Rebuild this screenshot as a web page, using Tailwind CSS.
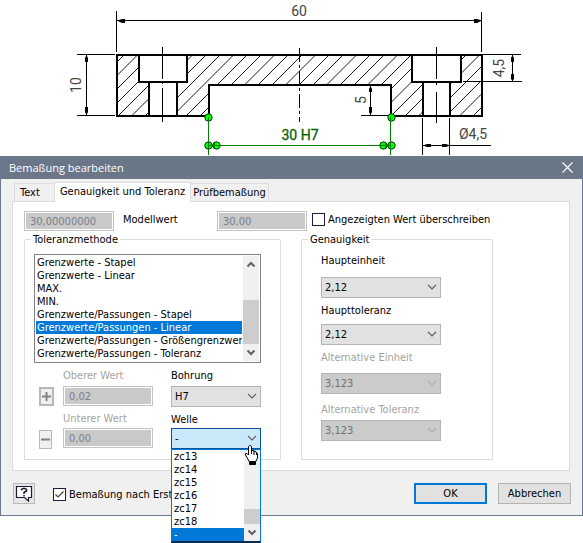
<!DOCTYPE html>
<html lang="de">
<head>
  <meta charset="UTF-8" />
  <meta name="viewport" content="width=device-width, initial-scale=1" />
  <title>Bemaßung bearbeiten</title>
  <script src="https://cdn.jsdelivr.net/npm/@tailwindcss/browser@4"></script>
</head>
<body class="bg-white text-black text-[11px] leading-[13px] font-['DejaVu_Sans_Condensed','Noto_Sans',sans-serif] pb-[27px]">

  <!-- part drawing -->
  <svg class="block w-full h-[156px]" viewBox="0 0 583 156" preserveAspectRatio="xMinYMin slice" fill="none" stroke="#000" font-family="Roboto, sans-serif" font-size="14">
    <defs>
      <clipPath id="part"><path d="M117 55H482V116H391V85H209V116H117Z" /></clipPath>
    </defs>
    <path clip-path="url(#part)" stroke-width="0.900" d="M124 55l-61 61M137.500 55l-61 61M151 55l-61 61M165 55l-61 61M179 55l-61 61M192.500 55l-61 61M206 55l-61 61M220 55l-61 61M233.500 55l-61 61M247 55l-61 61M261 55l-61 61M274.500 55l-61 61M288 55l-61 61M302 55l-61 61M315.500 55l-61 61M329 55l-61 61M343 55l-61 61M356.500 55l-61 61M370 55l-61 61M384 55l-61 61M397.500 55l-61 61M411 55l-61 61M425 55l-61 61M438.500 55l-61 61M452 55l-61 61M466 55l-61 61M479.500 55l-61 61M493 55l-61 61M507 55l-61 61M520.500 55l-61 61M534 55l-61 61" />
    <path d="M117 55H482V116H391V85H209V116H117Z" stroke-width="2" />
    <g fill="#fff" stroke-width="2">
      <path d="M139 55V82H187V55M149 82V116H177V82" />
      <path d="M412 55V82H461V55M423 82V116H450V82" />
    </g>
    <path d="M117 55H482M117 116H209M391 116H482" stroke-width="2" />
    <!-- centre lines -->
    <path d="M162.500 47V79M162.500 82V84M162.500 88V122M436.500 47V79M436.500 82V85M436.500 92V123" />
    <path d="M299.500 48V122" stroke-dasharray="14 3 3 3" />
    <!-- dimension lines -->
    <path d="M116.500 11V52M481.500 12V52M117 20.500H482" />
    <path d="M77 54.500H115M77 115.500H115M86.500 55V115" />
    <path d="M361 115.500H388M370.500 85V115" />
    <path d="M483 54.500H521M463 81.500H522M512.500 55V81" />
    <path d="M422.500 118V155M449.500 118V155M423 145.500H491" />
    <g fill="#000" stroke="none">
      <path d="M117 20.500L122 19H125V23H122ZM482 20.500L477 19H474V23H477Z" />
      <path d="M86.500 55L85 58V62H88V58ZM86.500 115L85 112V107H88V112Z" />
      <path d="M370.500 86L369 89V92H372V89ZM370.500 115L369 112V107H372V112Z" />
      <path d="M512.500 55L511 58V62H514V58ZM512.500 81L511 79V74H514V79Z" />
      <path d="M423 145.500L427 144H431V147H427ZM450 145.500L446 144H442V147H446Z" />
    </g>
    <g fill="#444" stroke="none" text-anchor="middle">
      <text x="299" y="16">60</text>
      <text x="473" y="139">Ø4,5</text>
      <text transform="translate(81 85) rotate(-90)">10</text>
      <text transform="translate(366 100) rotate(-90)">5</text>
      <text transform="translate(504 68) rotate(-90)">4,5</text>
      <text x="300" y="140" fill="#006400" stroke="#006400" stroke-width="0.3">30 H7</text>
    </g>
    <!-- selected dimension with its grips -->
    <g fill="#0f0" stroke="#063806">
      <circle cx="208.500" cy="117.500" r="3.700" />
      <circle cx="208.500" cy="145.500" r="3.700" />
      <circle cx="216.500" cy="145.500" r="3.700" />
      <circle cx="391.500" cy="117.500" r="3.700" />
      <circle cx="383.500" cy="145.500" r="3.700" />
      <circle cx="391.500" cy="145.500" r="3.700" />
    </g>
    <path d="M209 145.500L215 143V148ZM391 145.500L385 143V148Z" fill="#008000" stroke="none" />
    <path d="M208.500 117V155M390.500 117V155M209 145.500H391" stroke="#008000" />
  </svg>

  <!-- dialog -->
  <div role="dialog" aria-labelledby="title" class="bg-[#f0f0f0] border border-t-0 border-[#6b7a90]">
    <div class="h-[23px] bg-[#697789] text-white flex items-center justify-between pl-2 pr-[9px]">
      <h1 id="title" class="font-['Open_Sans','Noto_Sans',sans-serif]">Bemaßung bearbeiten</h1>
      <button aria-label="Schließen">
        <svg class="block" width="11" height="11" stroke="#fff" stroke-width="1.200"><path d="M0.500 0.500L10.500 10.500M10.500 0.500L0.500 10.500" /></svg>
      </button>
    </div>

    <div class="pt-[2px] pl-[11px] pr-[12px]">
      <!-- tabs -->
      <div role="tablist" class="flex items-end h-[20px] pl-[2px]">
        <button role="tab" class="h-[18px] w-[40px] border border-r-0 border-b-0 border-[#dcdcdc] pl-[5px] text-left">Text</button>
        <button role="tab" aria-selected="true" class="relative z-10 h-[20px] -mb-px w-[137px] border border-b-0 border-[#dcdcdc] bg-white pb-[2px] text-center whitespace-nowrap">Genauigkeit und Toleranz</button>
        <button role="tab" class="h-[18px] w-[78px] border border-l-0 border-b-0 border-[#dcdcdc] text-center whitespace-nowrap">Prüfbemaßung</button>
      </div>

      <div class="bg-white border border-[#dcdcdc] pt-[9px] pb-[10px] pl-[11px]">
        <div class="flex items-center h-[20px] whitespace-nowrap">
          <input id="model" disabled value="30,00000000" class="w-[90px] h-[20px] shrink-0 border border-[#c3c3c3] bg-[#c9c9c9] inset-ring inset-ring-white pl-[5px] text-[#7a808a]" />
          <label for="model" class="w-[94px] pl-[9px] pb-1">Modellwert</label>
          <input aria-label="Angezeigter Wert" disabled value="30,00" class="w-[90px] h-[20px] shrink-0 border border-[#c3c3c3] bg-[#c9c9c9] inset-ring inset-ring-white ml-[9px] pl-[5px] text-[#7a808a]" />
          <label class="flex items-center gap-[3px] ml-[5px] pb-[3px]">
            <input type="checkbox" class="appearance-none size-[13px] border border-[#1c1c48] bg-white" />
            Angezeigten Wert überschreiben
          </label>
        </div>

        <div class="flex gap-5 pt-[2px]">
          <fieldset class="w-[257px] h-[227px] border border-[#dcdcdc] border-t-0 relative">
            <legend class="w-full flex items-center gap-[2px] h-[13px] -mb-[7px]">
              <span class="w-[6px] border-t border-[#dcdcdc]"></span>Toleranzmethode<span class="grow border-t border-[#dcdcdc]"></span>
            </legend>
            <div class="px-[9px] pt-[15px]">
              <div class="flex w-[227px] border border-[#828288] p-px">
                <select size="8" aria-label="Toleranzmethode" class="grow w-0 h-[105px] overflow-hidden outline-none [&>option]:h-[13px] [&>option]:min-h-0 [&>option]:p-0 [&>option]:pl-px [&>option]:leading-[13px] [&>option]:checked:bg-[linear-gradient(#0078d7,#0078d7)] [&>option]:checked:[-webkit-text-fill-color:#fff]">
                  <option>Grenzwerte - Stapel</option>
                  <option>Grenzwerte - Linear</option>
                  <option>MAX.</option>
                  <option>MIN.</option>
                  <option>Grenzwerte/Passungen - Stapel</option>
                  <option selected>Grenzwerte/Passungen - Linear</option>
                  <option>Grenzwerte/Passungen - Größengrenzwerte</option>
                  <option>Grenzwerte/Passungen - Toleranz</option>
                </select>
                <div class="w-[16px] ml-px bg-[#f0f0f0] flex flex-col items-center justify-between">
                  <svg width="16" height="16" fill="none" stroke="#606060" stroke-width="2"><path d="M4.500 10.500L8 7L11.500 10.500" /></svg>
                  <div class="w-full h-[44px] mt-auto bg-[#cdcdcd]"></div>
                  <svg width="16" height="17" fill="none" stroke="#606060" stroke-width="2"><path d="M4.500 6.500L8 10L11.500 6.500" /></svg>
                </div>
              </div>

              <div class="flex w-[227px] justify-between pt-[5px]">
                <div class="flex gap-[9px] pl-[5px]">
                  <div class="pt-[19px] flex flex-col gap-6">
                    <button disabled aria-label="Plus" class="w-[15px] h-[19px] border-2 border-[#b8b8b4] bg-[#f0f0f0] flex items-center justify-center">
                      <svg class="shrink-0" width="9" height="9" stroke="#85808a" stroke-width="2"><path d="M0 4.500H9M4.500 0V9" /></svg>
                    </button>
                    <button disabled aria-label="Minus" class="w-[13px] h-[19px] border border-[#b8b8b4] bg-[#f0f0f0] flex items-center justify-center">
                      <svg class="shrink-0" width="9" height="9" stroke="#85808a" stroke-width="2"><path d="M0 4.500H9" /></svg>
                    </button>
                  </div>
                  <div class="flex flex-col">
                    <label for="upper" class="h-[18px] text-[#a5a49c] pt-px">Oberer Wert</label>
                    <input id="upper" disabled value="0,02" class="w-[90px] h-[20px] border border-[#c3c3c3] bg-[#c9c9c9] inset-ring inset-ring-white pl-[5px] text-[#7a808a]" />
                    <label for="lower" class="h-[22px] text-[#a5a49c] pt-[6px]">Unterer Wert</label>
                    <input id="lower" disabled value="0,00" class="w-[90px] h-[20px] border border-[#c3c3c3] bg-[#c9c9c9] inset-ring inset-ring-white pl-[5px] text-[#7a808a]" />
                  </div>
                </div>
                <div class="flex flex-col w-[90px]">
                  <label for="bore" class="h-[18px] pt-px">Bohrung</label>
                  <div class="relative">
                    <select id="bore" class="appearance-none block w-full h-[21px] border border-[#b4b4b4] bg-[#e1e1e1] pl-[3px]"><option>H7</option></select>
                    <svg class="absolute right-1 top-[7px] pointer-events-none" width="10" height="7" fill="none" stroke="#606060" stroke-width="1.200"><path d="M1 1L5 5L9 1" /></svg>
                  </div>
                  <label for="shaft" class="h-[21px] pt-[6px]">Welle</label>
                  <div class="relative">
                    <select id="shaft" class="appearance-none block w-full h-[21px] border border-[#0a5299] bg-[#cbe8f9] pl-[3px]"><option>-</option></select>
                    <svg class="absolute right-1 top-[7px] pointer-events-none" width="10" height="7" fill="none" stroke="#606060" stroke-width="1.200"><path d="M1 1L5 5L9 1" /></svg>
                    <!-- open list -->
                    <div class="absolute z-20 left-0 top-[21px] w-full flex border border-[#0078d7] border-b-2 border-b-[#0a2c50] bg-white">
                      <select size="7" aria-label="Welle" class="grow w-0 h-[91px] bg-white overflow-hidden outline-none [&>option]:h-[13px] [&>option]:min-h-0 [&>option]:p-0 [&>option]:pl-[2px] [&>option]:leading-[13px] [&>option]:checked:bg-[linear-gradient(#0078d7,#0078d7)] [&>option]:checked:[-webkit-text-fill-color:#fff]">
                        <option>zc13</option>
                        <option>zc14</option>
                        <option>zc15</option>
                        <option>zc16</option>
                        <option>zc17</option>
                        <option>zc18</option>
                        <option selected>-</option>
                      </select>
                      <div class="w-[16px] bg-[#f0f0f0] flex flex-col justify-end">
                        <div class="h-[15px] bg-[#cdcdcd]"></div>
                        <svg width="16" height="17" fill="none" stroke="#606060" stroke-width="2"><path d="M4.500 6.500L8 10L11.500 6.500" /></svg>
                      </div>
                    </div>
                    <!-- hand pointer -->
                    <svg class="absolute z-30 left-[74px] top-[17px]" width="13" height="21" viewBox="0 0 13 21">
                      <path d="M4.500 0.500H5.500L6.500 2V6L7 5.500H8.500L9 7L9.500 6H10.500L11.500 8L12.500 8.500V13L10.500 17H4.500L2 12.500L0.500 10V8.500H2L3.500 10V1.500Z" fill="#fff" stroke="#000" />
                      <path d="M6.500 6V9M9 7V10M11.500 8V10" stroke="#000" fill="none" />
                      <rect x="4" y="16" width="7" height="4" rx="1" />
                    </svg>
                  </div>
                </div>
              </div>
            </div>
          </fieldset>

          <fieldset class="w-[192px] h-[227px] border border-[#dcdcdc] border-t-0">
            <legend class="w-full flex items-center gap-[2px] h-[13px] -mb-[7px]">
              <span class="w-[6px] border-t border-[#dcdcdc]"></span>Genauigkeit<span class="grow border-t border-[#dcdcdc]"></span>
            </legend>
            <div class="pl-[19px] pt-[15px] flex flex-col">
              <label for="main-unit" class="h-[23px]">Haupteinheit</label>
              <div class="relative w-[120px]">
                <select id="main-unit" class="appearance-none block w-full h-[21px] border border-[#b4b4b4] bg-[#e1e1e1] pl-[3px]"><option>2,12</option></select>
                <svg class="absolute right-1 top-[7px] pointer-events-none" width="10" height="7" fill="none" stroke="#606060" stroke-width="1.200"><path d="M1 1L5 5L9 1" /></svg>
              </div>
              <label for="main-tol" class="h-[26px] pt-[6px]">Haupttoleranz</label>
              <div class="relative w-[120px]">
                <select id="main-tol" class="appearance-none block w-full h-[21px] border border-[#b4b4b4] bg-[#e1e1e1] pl-[3px]"><option>2,12</option></select>
                <svg class="absolute right-1 top-[7px] pointer-events-none" width="10" height="7" fill="none" stroke="#606060" stroke-width="1.200"><path d="M1 1L5 5L9 1" /></svg>
              </div>
              <label for="alt-unit" class="h-[28px] pt-[6px] text-[#a5a49c]">Alternative Einheit</label>
              <div class="relative w-[120px]">
                <select id="alt-unit" disabled class="appearance-none block w-full h-[21px] border border-[#b4b4b4] bg-[#cbcbcb] pl-[3px] text-[#6d7178] opacity-100"><option>3,123</option></select>
                <svg class="absolute right-1 top-[7px] pointer-events-none" width="10" height="7" fill="none" stroke="#b4b4b0" stroke-width="1.500"><path d="M1 1L5 5L9 1" /></svg>
              </div>
              <label for="alt-tol" class="h-[26px] pt-[9px] text-[#a5a49c]">Alternative Toleranz</label>
              <div class="relative w-[120px]">
                <select id="alt-tol" disabled class="appearance-none block w-full h-[21px] border border-[#b4b4b4] bg-[#cbcbcb] pl-[3px] text-[#6d7178] opacity-100"><option>3,123</option></select>
                <svg class="absolute right-1 top-[7px] pointer-events-none" width="10" height="7" fill="none" stroke="#b4b4b0" stroke-width="1.500"><path d="M1 1L5 5L9 1" /></svg>
              </div>
            </div>
          </fieldset>
        </div>
      </div>

      <!-- footer -->
      <div class="flex items-center h-[44px] whitespace-nowrap">
        <button aria-label="Hilfe" class="w-[22px] h-[21px] ml-px border border-[#b8b8b4] bg-[#e6e6e6] flex items-center justify-center">
          <svg width="18" height="17" fill="none" stroke="#1c1c30">
            <path d="M1.500 1.500H16.500V12.500H13.500V16L9.500 12.500H1.500Z" fill="#fff" stroke-width="1.200" />
            <path d="M6.500 5.500V4.500L8 3.500H10L11.500 4.500V6L9 7.500V9M9 10V11.500" stroke-width="1.500" />
          </svg>
        </button>
        <label class="flex items-center gap-[3px] ml-[18px] pt-[2px]">
          <input type="checkbox" checked class="appearance-none size-[13px] border border-[#1c1c48] bg-white" />
          <svg class="-ml-4 w-[13px] h-[13px] pointer-events-none" viewBox="0 0 13 13" fill="none" stroke="#404040" stroke-width="1.200"><path d="M2.500 6.500L5 9L10.500 3.500" /></svg>
          Bemaßung nach Erstellung
        </label>
        <button class="w-[73px] h-[21px] ml-auto border-2 border-[#0078d7] bg-[#e1e1e1]">OK</button>
        <button class="w-[73px] h-[21px] ml-[11px] -mr-px border border-[#b4b4b0] bg-[#e1e1e1]">Abbrechen</button>
      </div>
    </div>
  </div>
</body>
</html>
